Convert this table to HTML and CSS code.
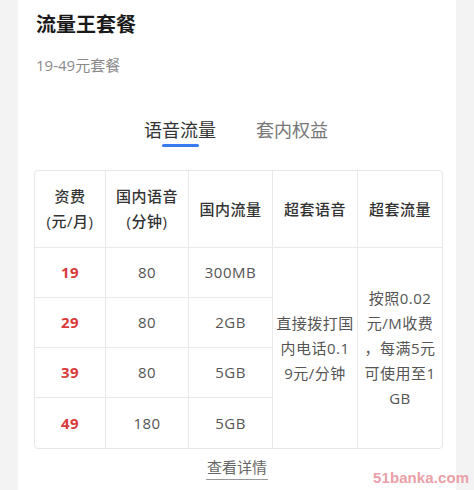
FILE: index.html
```html
<!DOCTYPE html>
<html lang="zh">
<head>
<meta charset="utf-8">
<link rel="stylesheet" href="styles.css">
</head>
<body>
<div class="page">
  <div class="card">
    <h1 class="title">流量王套餐</h1>
    <p class="subtitle">19-49元套餐</p>
    <div class="tabs">
      <div class="tab active">语音流量</div>
      <div class="tab">套内权益</div>
    </div>
    <table class="plans">
      <thead>
        <tr>
          <th class="c1">资费<br>(元/月)</th>
          <th class="c2">国内语音<br>(分钟)</th>
          <th class="c3">国内流量</th>
          <th class="c4">超套语音</th>
          <th class="c5">超套流量</th>
        </tr>
      </thead>
      <tbody>
        <tr>
          <td class="price">19</td>
          <td>80</td>
          <td>300MB</td>
          <td rowspan="4" class="multi">直接拨打国<br>内电话0.1<br>9元/分钟</td>
          <td rowspan="4" class="multi last">按照0.02<br>元/M收费<br>，每满5元<br>可使用至1<br>GB</td>
        </tr>
        <tr>
          <td class="price">29</td>
          <td>80</td>
          <td>2GB</td>
        </tr>
        <tr>
          <td class="price">39</td>
          <td>80</td>
          <td>5GB</td>
        </tr>
        <tr class="lastrow">
          <td class="price">49</td>
          <td>180</td>
          <td>5GB</td>
        </tr>
      </tbody>
    </table>
    <div class="more"><a class="more-link">查看详情</a></div>
  </div>
</div>
<div class="watermark">51banka.com</div>
</body>
</html>
```
FILE: styles.css
```css
html, body {
  margin: 0;
  padding: 0;
}
body {
  background: #f3f3f3;
  font-family: "Open Sans", "Noto Sans CJK SC", sans-serif;
  width: 474px;
  height: 490px;
  overflow: hidden;
  position: relative;
}
.page {
  padding-left: 18px;
}
.card {
  width: 438px;
  height: 490px;
  background: #fff;
  box-sizing: border-box;
  padding-top: 8px;
}
.title {
  margin: 0 0 0 18px;
  font-family: "Noto Sans CJK SC", sans-serif;
  font-size: 20px;
  line-height: 32px;
  font-weight: 700;
  color: #1a1a1a;
}
.subtitle {
  margin: 15px 0 0 18px;
  font-size: 15px;
  line-height: 20px;
  color: #8a8a8a;
}
.tabs {
  display: flex;
  justify-content: center;
  gap: 40px;
  margin-top: 42px;
  padding-right: 2px;
}
.tab {
  font-family: "Noto Sans CJK SC", sans-serif;
  font-size: 18px;
  line-height: 24px;
  color: #777;
  position: relative;
  padding-bottom: 10px;
}
.tab.active {
  color: #333;
}
.tab.active::after {
  content: "";
  position: absolute;
  left: 18px;
  width: 37px;
  height: 3px;
  bottom: 4px;
  border-radius: 2px;
  background: #3a7af0;
}
.plans {
  margin: 19px 0 0 16px;
  width: 407px;
  border-collapse: separate;
  border-spacing: 0;
  border: 1px solid #e6e6e6;
  border-radius: 4px;
  table-layout: fixed;
  font-size: 15px;
  color: #555;
}
.plans th, .plans td {
  box-sizing: border-box;
  text-align: center;
  vertical-align: middle;
  border-right: 1px solid #e9e9e9;
  border-bottom: 1px solid #e9e9e9;
  padding: 0 2px;
  line-height: 25px;
  letter-spacing: 0.5px;
}
.plans th {
  height: 77px;
  font-weight: 500;
  color: #333;
}
.plans td {
  height: 50px;
}
.plans th.c5, .plans td.last {
  border-right: none;
}
.plans tr.lastrow td, .plans td.multi {
  border-bottom: none;
}
.c1 { width: 71px; }
.c2 { width: 83px; }
.c3 { width: 84px; }
.c4 { width: 85px; }
.c5 { width: 84px; }
.price {
  color: #d93a3a;
  font-weight: 700;
}
.more {
  text-align: center;
  margin-top: 7px;
}
.more-link {
  display: inline-block;
  font-family: "Noto Sans CJK SC", sans-serif;
  font-size: 15px;
  line-height: 22px;
  color: #666;
  border-bottom: 1px solid #999;
  padding: 0 1px 1px;
}
.watermark {
  position: absolute;
  left: 373px;
  top: 469px;
  font-family: "Liberation Sans", sans-serif;
  font-weight: 700;
  font-size: 15px;
  line-height: 18px;
  color: #eaa0a8;
  letter-spacing: 0.1px;
}
```
